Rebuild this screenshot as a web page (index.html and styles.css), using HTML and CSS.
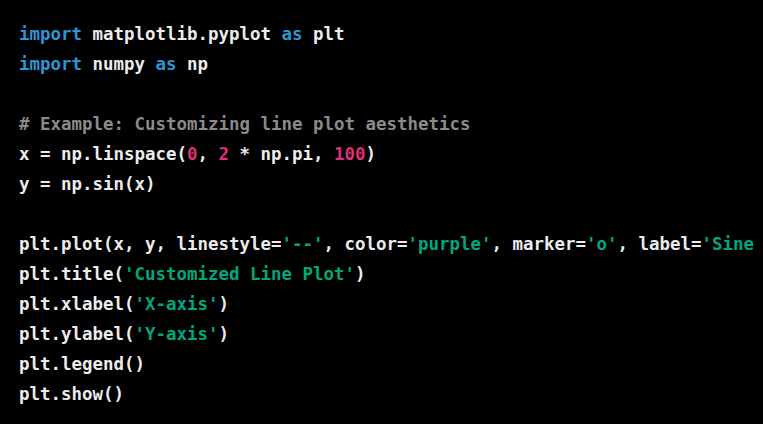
FILE: index.html
```html
<!DOCTYPE html>
<html>
<head>
<meta charset="utf-8">
<link rel="stylesheet" href="styles.css">
</head>
<body>
<div class="code-block"><pre class="code"><code class="code-inner"><span class="kw">import</span> matplotlib.pyplot <span class="kw">as</span> plt
<span class="kw">import</span> numpy <span class="kw">as</span> np

<span class="cm"># Example: Customizing line plot aesthetics</span>
x = np.linspace(<span class="num">0</span>, <span class="num">2</span> * np.pi, <span class="num">100</span>)
y = np.sin(x)

plt.plot(x, y, linestyle=<span class="str">'--'</span>, color=<span class="str">'purple'</span>, marker=<span class="str">'o'</span>, label=<span class="str">'Sine Wave'</span>)
plt.title(<span class="str">'Customized Line Plot'</span>)
plt.xlabel(<span class="str">'X-axis'</span>)
plt.ylabel(<span class="str">'Y-axis'</span>)
plt.legend()
plt.show()</code></pre></div>
</body>
</html>
```
FILE: styles.css
```css
html, body {
  margin: 0;
  padding: 0;
  background: #000;
  width: 763px;
  height: 424px;
  overflow: hidden;
}
.code-block {
  background: #000;
  padding: 19px 0 0 19px;
  overflow: hidden;
}
.code {
  margin: 0;
  font-family: "DejaVu Sans Mono", monospace;
  font-size: 17.45px;
  line-height: 30px;
  font-weight: bold;
  color: #ececec;
  white-space: pre;
}
.code-inner {
  font-family: inherit;
  font-size: inherit;
}
.kw { color: #2e95d3; }
.str { color: #00a67d; }
.num { color: #df3079; }
.cm { color: #8a8a8a; }
```
